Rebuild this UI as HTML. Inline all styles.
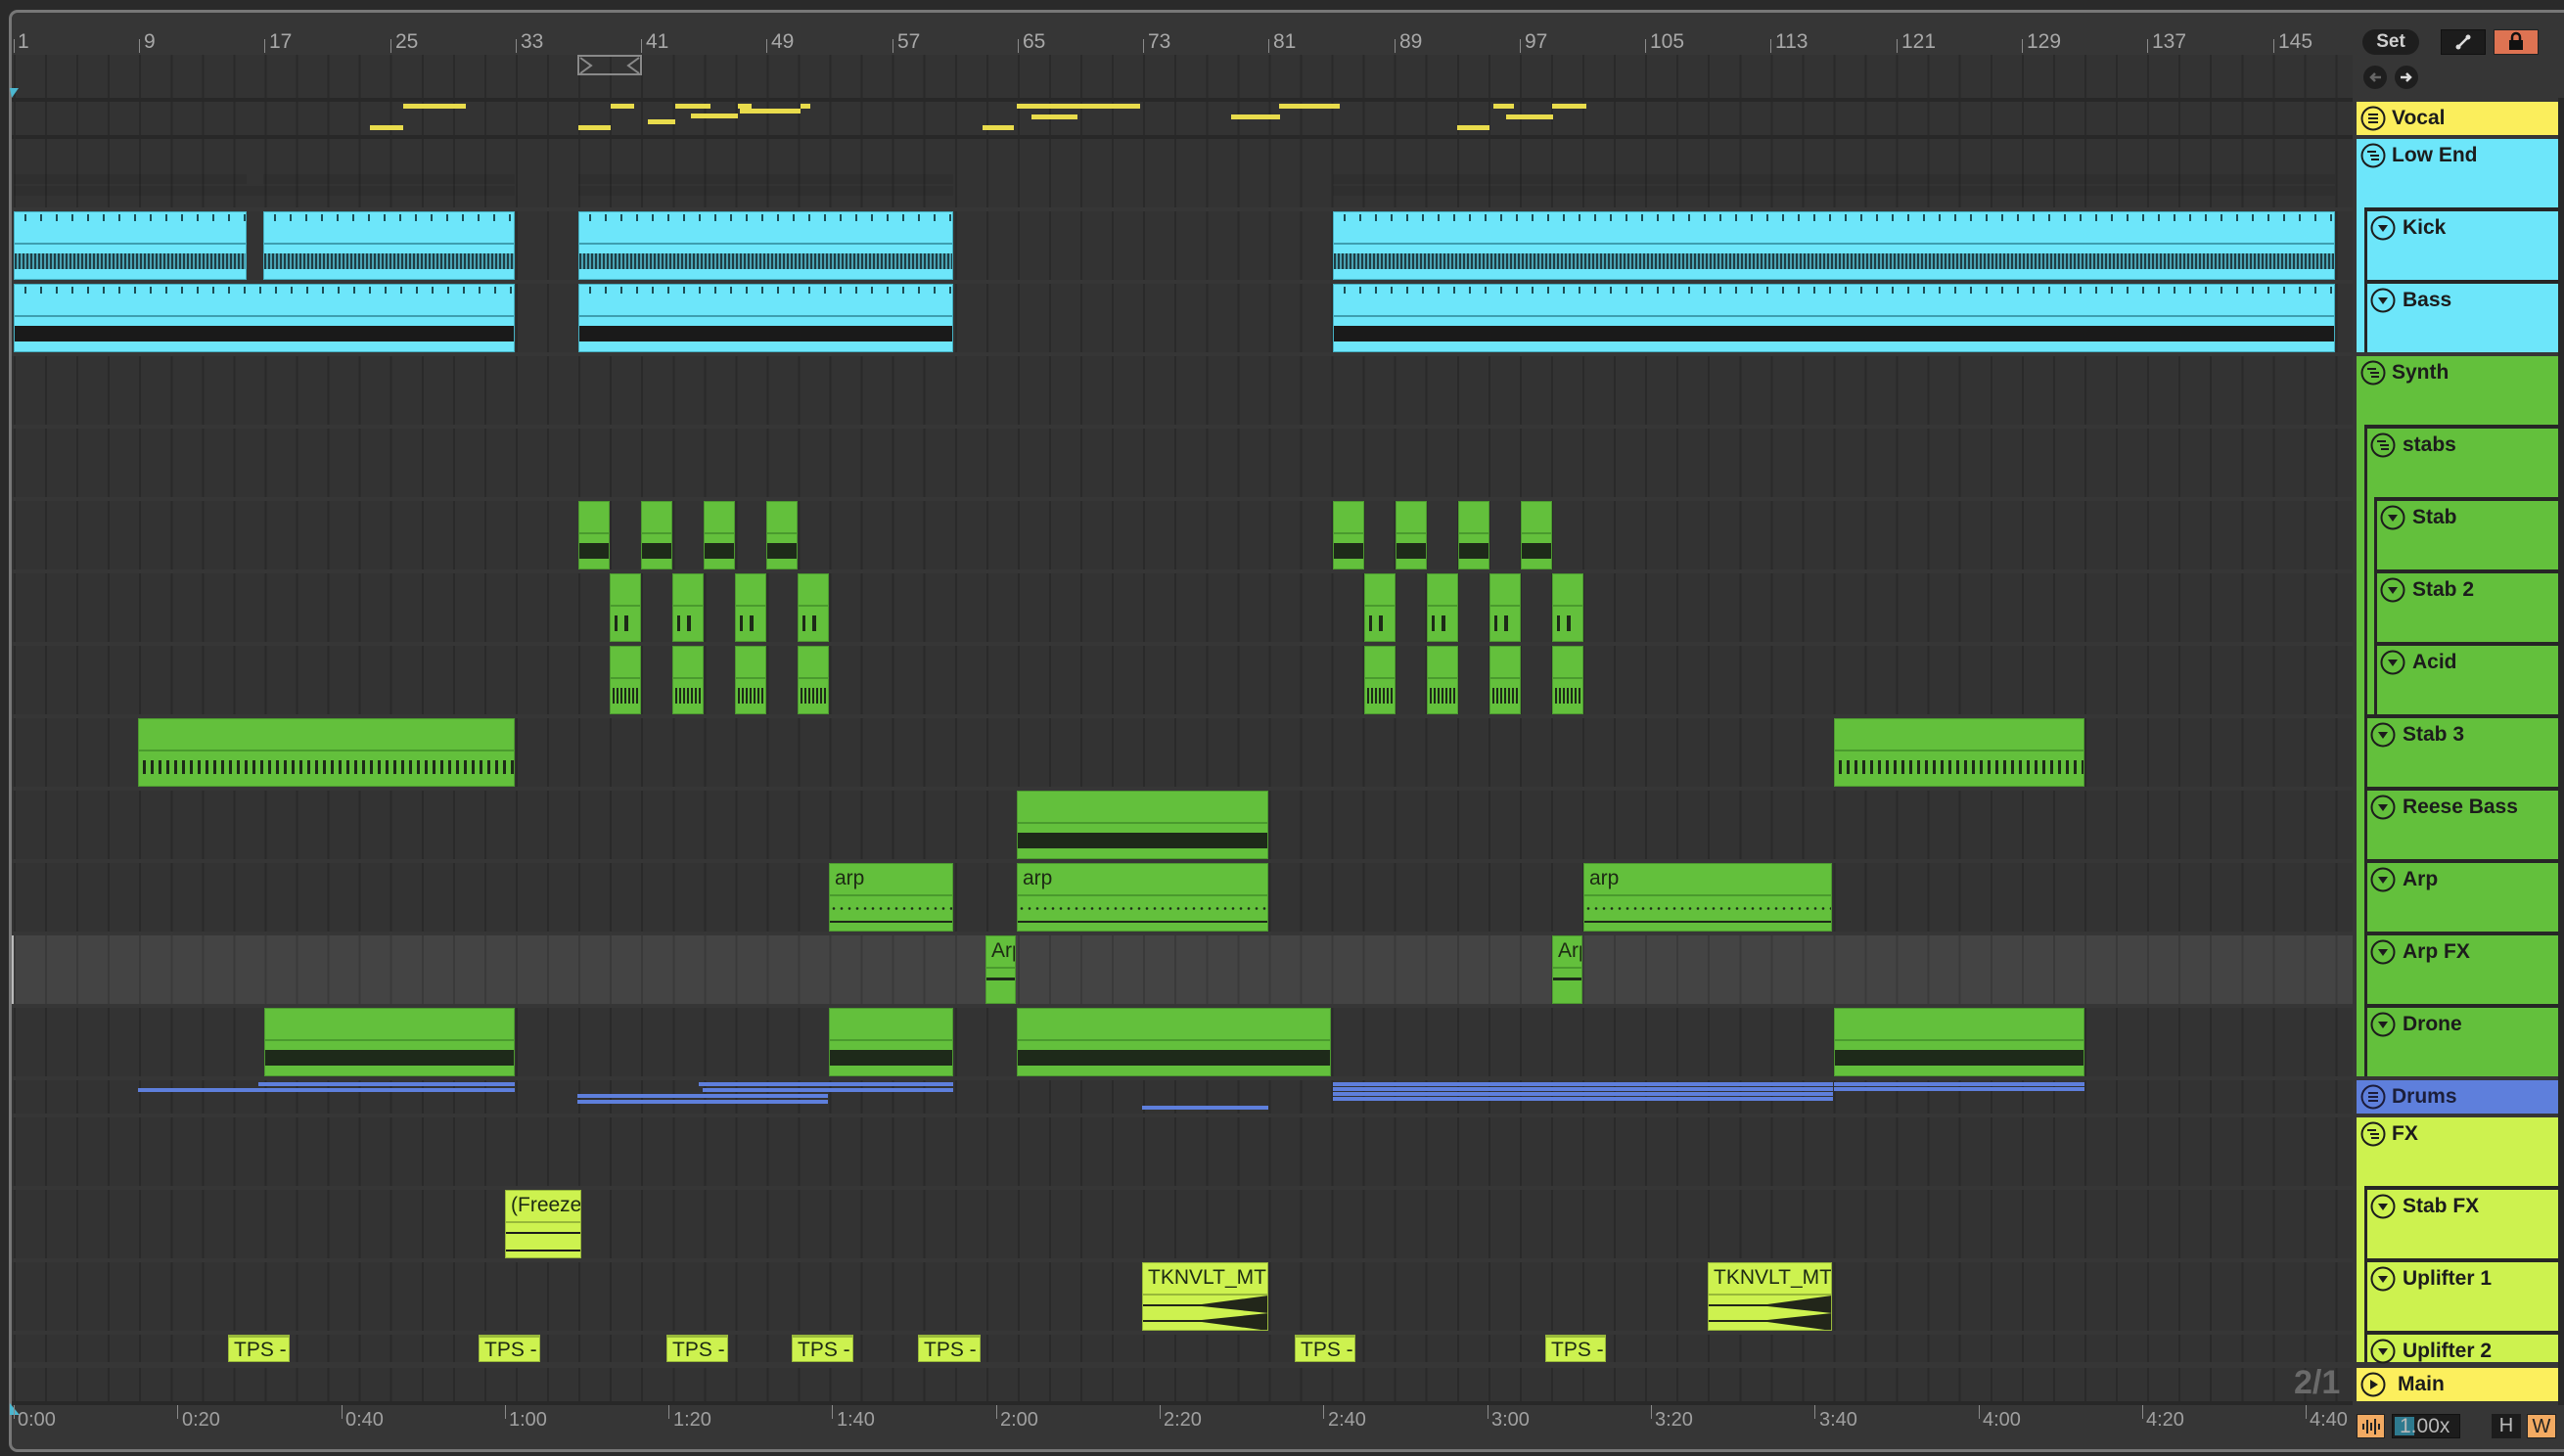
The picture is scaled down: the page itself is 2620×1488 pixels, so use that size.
<!DOCTYPE html>
<html><head><meta charset="utf-8"><style>
*{margin:0;padding:0}
body{width:2620px;height:1488px;background:#2a2a2a;position:relative;overflow:hidden;font-family:"Liberation Sans",sans-serif}
.frame{position:absolute;left:9px;top:10px;width:2640px;height:1468px;border:3px solid #777;border-right:none;border-radius:9px;background:#363636}
.a{position:absolute}
.ln{position:absolute;left:12px;width:2392px;background:repeating-linear-gradient(90deg,#2a2a2a 0 2px,transparent 2px 32.06px) 2px 0,#333}
.sel{background:repeating-linear-gradient(90deg,#3a3a3a 0 2px,transparent 2px 32.06px) 2px 0,#444}
.c{position:absolute;box-sizing:border-box;overflow:hidden;height:70px}
.cy{background:repeating-linear-gradient(90deg,#1d4c55 0 2px,transparent 2px 16px) 10px 2px/100% 7px no-repeat,linear-gradient(#6de6fa 0 31px,#3e9eb0 31px 33px,#6de6fa 33px 42px,transparent 42px 58px,#6de6fa 58px),repeating-linear-gradient(90deg,#1e3d44 0 2px,#4aa3b3 2px 4px);border:1px solid #45b0c2}
.cy.bs{background:repeating-linear-gradient(90deg,#1d4c55 0 2px,transparent 2px 16px) 10px 2px/100% 7px no-repeat,linear-gradient(#6de6fa 0 31px,#3e9eb0 31px 33px,#6de6fa 33px 42px,#1a1a1a 42px 58px,#6de6fa 58px)}
.g{background:linear-gradient(#63c03c 0 31px,#4a9a2e 31px 33px,#63c03c 33px 42px,#1e2a1a 42px 58px,#63c03c 58px);border:1px solid #4d9a30}
.g2{background:linear-gradient(90deg,transparent 4px,#1d2a18 4px 7px,transparent 7px 14px,#1d2a18 14px 18px,transparent 18px) 0 42px/100% 16px no-repeat,linear-gradient(#63c03c 0 31px,#4a9a2e 31px 33px,#63c03c 33px);border:1px solid #4d9a30}
.g3{background:repeating-linear-gradient(90deg,#1d2a18 0 2px,transparent 2px 4px) 2px 42px/100% 16px no-repeat,linear-gradient(#63c03c 0 31px,#4a9a2e 31px 33px,#63c03c 33px);border:1px solid #4d9a30}
.g4{background:repeating-linear-gradient(90deg,#1d2a18 0 3px,transparent 3px 8px) 4px 42px/100% 14px no-repeat,linear-gradient(#63c03c 0 31px,#4a9a2e 31px 33px,#63c03c 33px);border:1px solid #4d9a30}
.ga{background:radial-gradient(circle,#1d2a18 1px,transparent 1.6px) 0 42px/8px 7px repeat-x,linear-gradient(#1d2a18,#1d2a18) 0 58px/100% 2px no-repeat,linear-gradient(#63c03c 0 31px,#4a9a2e 31px 33px,#63c03c 33px);border:1px solid #4d9a30}
.lb{font-family:"Liberation Sans Narrow","Liberation Sans",sans-serif;font-size:21px;color:#1d2a14;position:absolute;left:5px;top:3px;white-space:nowrap}
.y{background:linear-gradient(#cdf24f 0 31px,#98b83a 31px 33px,#cdf24f 33px);border:1px solid #98b83a}
.n{position:absolute;height:5px;background:#e9dc4c}
.d{position:absolute;height:4px;background:#5e7fdc}
.hd{position:absolute;left:2408px;width:206px;box-sizing:border-box}
.ch{position:absolute;right:0;box-sizing:border-box;border-left:3px solid #262626;border-top:4px solid #262626;height:74px}
.t{position:absolute;font-weight:bold;font-size:21px;color:#1c1c1c;white-space:nowrap}
.ic{position:absolute;width:26px;height:26px}
.rl{position:absolute;top:31px;font-size:21px;color:#a8a8a8}
.tk{position:absolute;width:1px;background:#8a8a8a}
.tl{position:absolute;top:1440px;font-size:20px;color:#a0a0a0}
</style></head><body>
<div class="frame"></div>

<div class="tk" style="left:14px;top:40px;height:14px"></div><div class="rl" style="left:18px">1</div>
<div class="tk" style="left:142px;top:40px;height:14px"></div><div class="rl" style="left:147px">9</div>
<div class="tk" style="left:270px;top:40px;height:14px"></div><div class="rl" style="left:275px">17</div>
<div class="tk" style="left:399px;top:40px;height:14px"></div><div class="rl" style="left:404px">25</div>
<div class="tk" style="left:527px;top:40px;height:14px"></div><div class="rl" style="left:532px">33</div>
<div class="tk" style="left:655px;top:40px;height:14px"></div><div class="rl" style="left:660px">41</div>
<div class="tk" style="left:783px;top:40px;height:14px"></div><div class="rl" style="left:788px">49</div>
<div class="tk" style="left:912px;top:40px;height:14px"></div><div class="rl" style="left:917px">57</div>
<div class="tk" style="left:1040px;top:40px;height:14px"></div><div class="rl" style="left:1045px">65</div>
<div class="tk" style="left:1168px;top:40px;height:14px"></div><div class="rl" style="left:1173px">73</div>
<div class="tk" style="left:1296px;top:40px;height:14px"></div><div class="rl" style="left:1301px">81</div>
<div class="tk" style="left:1425px;top:40px;height:14px"></div><div class="rl" style="left:1430px">89</div>
<div class="tk" style="left:1553px;top:40px;height:14px"></div><div class="rl" style="left:1558px">97</div>
<div class="tk" style="left:1681px;top:40px;height:14px"></div><div class="rl" style="left:1686px">105</div>
<div class="tk" style="left:1809px;top:40px;height:14px"></div><div class="rl" style="left:1814px">113</div>
<div class="tk" style="left:1938px;top:40px;height:14px"></div><div class="rl" style="left:1943px">121</div>
<div class="tk" style="left:2066px;top:40px;height:14px"></div><div class="rl" style="left:2071px">129</div>
<div class="tk" style="left:2194px;top:40px;height:14px"></div><div class="rl" style="left:2199px">137</div>
<div class="tk" style="left:2323px;top:40px;height:14px"></div><div class="rl" style="left:2328px">145</div>

<div class="ln" style="top:56px;height:44px"></div>
<div class="ln" style="top:104px;height:34px"></div>
<div class="ln" style="top:142px;height:70px"></div>
<div class="ln" style="top:216px;height:70px"></div>
<div class="ln" style="top:290px;height:70px"></div>
<div class="ln" style="top:364px;height:70px"></div>
<div class="ln" style="top:438px;height:70px"></div>
<div class="ln" style="top:512px;height:70px"></div>
<div class="ln" style="top:586px;height:70px"></div>
<div class="ln" style="top:660px;height:70px"></div>
<div class="ln" style="top:734px;height:70px"></div>
<div class="ln" style="top:808px;height:70px"></div>
<div class="ln" style="top:882px;height:70px"></div>
<div class="ln sel" style="top:956px;height:70px"></div>
<div class="ln" style="top:1030px;height:70px"></div>
<div class="ln" style="top:1104px;height:34px"></div>
<div class="ln" style="top:1142px;height:70px"></div>
<div class="ln" style="top:1216px;height:70px"></div>
<div class="ln" style="top:1290px;height:70px"></div>
<div class="ln" style="top:1364px;height:28px"></div>
<div class="ln" style="top:1398px;height:34px"></div>
<div class="a" style="left:12px;top:100px;width:2392px;height:4px;background:#282828"></div>
<div class="a" style="left:12px;top:138px;width:2392px;height:4px;background:#282828"></div>
<div class="a" style="left:12px;top:1432px;width:2392px;height:4px;background:#282828"></div>

<div class="a" style="left:590px;top:56px;width:62px;height:17px;border:2px solid #8a8a8a"></div>
<svg class="a" style="left:590px;top:56px" width="66" height="21"><path d="M3 3 L14 11 L3 19 M63 3 L52 11 L63 19" stroke="#8a8a8a" stroke-width="2" fill="none"/></svg>
<svg class="a" style="left:10px;top:90px" width="10" height="12"><path d="M0 0 L9 0 L2 10Z" fill="#4bb7d0"/></svg>
<div class="a" style="left:12px;top:956px;width:2px;height:70px;background:#bbb"></div>

<div class="n" style="left:412px;top:106px;width:64px"></div>
<div class="n" style="left:378px;top:128px;width:34px"></div>
<div class="n" style="left:591px;top:128px;width:33px"></div>
<div class="n" style="left:624px;top:106px;width:24px"></div>
<div class="n" style="left:662px;top:122px;width:28px"></div>
<div class="n" style="left:690px;top:106px;width:36px"></div>
<div class="n" style="left:706px;top:116px;width:48px"></div>
<div class="n" style="left:754px;top:106px;width:14px"></div>
<div class="n" style="left:756px;top:111px;width:62px"></div>
<div class="n" style="left:818px;top:106px;width:10px"></div>
<div class="n" style="left:1004px;top:128px;width:32px"></div>
<div class="n" style="left:1039px;top:106px;width:126px"></div>
<div class="n" style="left:1054px;top:117px;width:47px"></div>
<div class="n" style="left:1258px;top:117px;width:50px"></div>
<div class="n" style="left:1307px;top:106px;width:62px"></div>
<div class="n" style="left:1489px;top:128px;width:33px"></div>
<div class="n" style="left:1526px;top:106px;width:21px"></div>
<div class="n" style="left:1539px;top:117px;width:48px"></div>
<div class="n" style="left:1586px;top:106px;width:35px"></div>

<div class="a" style="left:14px;top:178px;width:238px;height:10px;background:rgba(0,0,0,.07)"></div>
<div class="a" style="left:269px;top:178px;width:257px;height:10px;background:rgba(0,0,0,.07)"></div>
<div class="a" style="left:591px;top:178px;width:383px;height:10px;background:rgba(0,0,0,.07)"></div>
<div class="a" style="left:1362px;top:178px;width:1024px;height:10px;background:rgba(0,0,0,.07)"></div>
<div class="a" style="left:14px;top:190px;width:512px;height:10px;background:rgba(0,0,0,.07)"></div>
<div class="a" style="left:591px;top:190px;width:383px;height:10px;background:rgba(0,0,0,.07)"></div>
<div class="a" style="left:1362px;top:190px;width:1024px;height:10px;background:rgba(0,0,0,.07)"></div>

<div class="c cy" style="left:14px;top:216px;width:238px"></div>
<div class="c cy" style="left:269px;top:216px;width:257px"></div>
<div class="c cy" style="left:591px;top:216px;width:383px"></div>
<div class="c cy" style="left:1362px;top:216px;width:1024px"></div>
<div class="c cy bs" style="left:14px;top:290px;width:512px"></div>
<div class="c cy bs" style="left:591px;top:290px;width:383px"></div>
<div class="c cy bs" style="left:1362px;top:290px;width:1024px"></div>

<div class="c g" style="left:591px;top:512px;width:32px"></div>
<div class="c g" style="left:655px;top:512px;width:32px"></div>
<div class="c g" style="left:719px;top:512px;width:32px"></div>
<div class="c g" style="left:783px;top:512px;width:32px"></div>
<div class="c g" style="left:1362px;top:512px;width:32px"></div>
<div class="c g" style="left:1426px;top:512px;width:32px"></div>
<div class="c g" style="left:1490px;top:512px;width:32px"></div>
<div class="c g" style="left:1554px;top:512px;width:32px"></div>
<div class="c g2" style="left:623px;top:586px;width:32px"></div>
<div class="c g2" style="left:687px;top:586px;width:32px"></div>
<div class="c g2" style="left:751px;top:586px;width:32px"></div>
<div class="c g2" style="left:815px;top:586px;width:32px"></div>
<div class="c g2" style="left:1394px;top:586px;width:32px"></div>
<div class="c g2" style="left:1458px;top:586px;width:32px"></div>
<div class="c g2" style="left:1522px;top:586px;width:32px"></div>
<div class="c g2" style="left:1586px;top:586px;width:32px"></div>
<div class="c g3" style="left:623px;top:660px;width:32px"></div>
<div class="c g3" style="left:687px;top:660px;width:32px"></div>
<div class="c g3" style="left:751px;top:660px;width:32px"></div>
<div class="c g3" style="left:815px;top:660px;width:32px"></div>
<div class="c g3" style="left:1394px;top:660px;width:32px"></div>
<div class="c g3" style="left:1458px;top:660px;width:32px"></div>
<div class="c g3" style="left:1522px;top:660px;width:32px"></div>
<div class="c g3" style="left:1586px;top:660px;width:32px"></div>
<div class="c g4" style="left:141px;top:734px;width:385px"></div>
<div class="c g4" style="left:1874px;top:734px;width:256px"></div>
<div class="c g" style="left:1039px;top:808px;width:257px"></div>
<div class="c ga" style="left:847px;top:882px;width:127px"><span class="lb">arp</span></div>
<div class="c ga" style="left:1039px;top:882px;width:257px"><span class="lb">arp</span></div>
<div class="c ga" style="left:1618px;top:882px;width:254px"><span class="lb">arp</span></div>
<div class="c g" style="left:1007px;top:956px;width:31px;background:linear-gradient(#63c03c 0 31px,#4a9a2e 31px 33px,#63c03c 33px 42px,#1e2a1a 42px 45px,#63c03c 45px)"><span class="lb">Arp</span></div>
<div class="c g" style="left:1586px;top:956px;width:31px;background:linear-gradient(#63c03c 0 31px,#4a9a2e 31px 33px,#63c03c 33px 42px,#1e2a1a 42px 45px,#63c03c 45px)"><span class="lb">Arp</span></div>
<div class="c g" style="left:270px;top:1030px;width:256px"></div>
<div class="c g" style="left:847px;top:1030px;width:127px"></div>
<div class="c g" style="left:1039px;top:1030px;width:321px"></div>
<div class="c g" style="left:1874px;top:1030px;width:256px"></div>

<div class="d" style="left:264px;top:1106px;width:262px"></div>
<div class="d" style="left:141px;top:1112px;width:385px"></div>
<div class="d" style="left:590px;top:1118px;width:256px"></div>
<div class="d" style="left:590px;top:1124px;width:256px"></div>
<div class="d" style="left:714px;top:1106px;width:260px"></div>
<div class="d" style="left:718px;top:1112px;width:256px"></div>
<div class="d" style="left:1167px;top:1130px;width:129px"></div>
<div class="d" style="left:1362px;top:1106px;width:511px"></div>
<div class="d" style="left:1362px;top:1111px;width:511px"></div>
<div class="d" style="left:1362px;top:1116px;width:511px"></div>
<div class="d" style="left:1362px;top:1121px;width:511px"></div>
<div class="d" style="left:1874px;top:1106px;width:256px"></div>
<div class="d" style="left:1874px;top:1111px;width:256px"></div>

<div class="c y" style="left:516px;top:1216px;width:78px;background:linear-gradient(#cdf24f 0 31px,#98b83a 31px 33px,#cdf24f 33px 42px,#1c1c1c 42px 44px,#cdf24f 44px 60px,#1c1c1c 60px 62px,#cdf24f 62px)"><span class="lb">(Freeze</span></div>
<div class="c y" style="left:1167px;top:1290px;width:129px"><span class="lb">TKNVLT_MTE</span><svg class="a" style="left:0;top:33px" width="129" height="36"><path d="M0 9 H60 L128 0 V36 L60 27 H0 V25 H60 L128 18 L60 11 H0Z" fill="#22261a"/></svg></div>
<div class="c y" style="left:1745px;top:1290px;width:127px"><span class="lb">TKNVLT_MTE</span><svg class="a" style="left:0;top:33px" width="127" height="36"><path d="M0 9 H60 L126 0 V36 L60 27 H0 V25 H60 L126 18 L60 11 H0Z" fill="#22261a"/></svg></div>
<div class="c y" style="left:233px;top:1364px;width:63px;height:28px;border-top:3px solid #98b83a"><span class="lb" style="top:1px">TPS - I</span></div>
<div class="c y" style="left:489px;top:1364px;width:63px;height:28px;border-top:3px solid #98b83a"><span class="lb" style="top:1px">TPS - I</span></div>
<div class="c y" style="left:681px;top:1364px;width:63px;height:28px;border-top:3px solid #98b83a"><span class="lb" style="top:1px">TPS - I</span></div>
<div class="c y" style="left:809px;top:1364px;width:63px;height:28px;border-top:3px solid #98b83a"><span class="lb" style="top:1px">TPS - I</span></div>
<div class="c y" style="left:938px;top:1364px;width:64px;height:28px;border-top:3px solid #98b83a"><span class="lb" style="top:1px">TPS - I</span></div>
<div class="c y" style="left:1323px;top:1364px;width:62px;height:28px;border-top:3px solid #98b83a"><span class="lb" style="top:1px">TPS - I</span></div>
<div class="c y" style="left:1579px;top:1364px;width:62px;height:28px;border-top:3px solid #98b83a"><span class="lb" style="top:1px">TPS - I</span></div>

<svg class="a" style="left:10px;top:1434px" width="12" height="12"><path d="M0 0 L10 12 L0 12Z" fill="#4bb7d0"/></svg>
<div class="tk" style="left:14px;top:1436px;height:14px"></div><div class="tl" style="left:18px">0:00</div>
<div class="tk" style="left:181px;top:1436px;height:14px"></div><div class="tl" style="left:186px">0:20</div>
<div class="tk" style="left:349px;top:1436px;height:14px"></div><div class="tl" style="left:353px">0:40</div>
<div class="tk" style="left:516px;top:1436px;height:14px"></div><div class="tl" style="left:520px">1:00</div>
<div class="tk" style="left:683px;top:1436px;height:14px"></div><div class="tl" style="left:688px">1:20</div>
<div class="tk" style="left:850px;top:1436px;height:14px"></div><div class="tl" style="left:855px">1:40</div>
<div class="tk" style="left:1018px;top:1436px;height:14px"></div><div class="tl" style="left:1022px">2:00</div>
<div class="tk" style="left:1185px;top:1436px;height:14px"></div><div class="tl" style="left:1189px">2:20</div>
<div class="tk" style="left:1352px;top:1436px;height:14px"></div><div class="tl" style="left:1357px">2:40</div>
<div class="tk" style="left:1520px;top:1436px;height:14px"></div><div class="tl" style="left:1524px">3:00</div>
<div class="tk" style="left:1687px;top:1436px;height:14px"></div><div class="tl" style="left:1691px">3:20</div>
<div class="tk" style="left:1854px;top:1436px;height:14px"></div><div class="tl" style="left:1859px">3:40</div>
<div class="tk" style="left:2022px;top:1436px;height:14px"></div><div class="tl" style="left:2026px">4:00</div>
<div class="tk" style="left:2189px;top:1436px;height:14px"></div><div class="tl" style="left:2193px">4:20</div>
<div class="tk" style="left:2356px;top:1436px;height:14px"></div><div class="tl" style="left:2360px">4:40</div>

<div class="a" style="left:2414px;top:30px;width:58px;height:26px;border-radius:13px;background:#1e1e1e;color:#cfcfcf;font-size:19px;font-weight:bold;text-align:center;line-height:26px">Set</div>
<div class="a" style="left:2494px;top:30px;width:46px;height:26px;background:#1c1c1c;border:1px solid #111;box-sizing:border-box"><svg width="44" height="24"><path d="M17 17 L27 7" stroke="#ddd" stroke-width="2.5"/><circle cx="17" cy="17" r="2.5" fill="#ddd"/><circle cx="27" cy="7" r="2.5" fill="#ddd"/></svg></div>
<div class="a" style="left:2548px;top:30px;width:46px;height:26px;background:#de7352;border:1px solid #222;box-sizing:border-box"><svg width="44" height="24"><rect x="15" y="10" width="14" height="10" fill="#111"/><path d="M18 11 V7 a4 4 0 0 1 8 0 V11" stroke="#111" stroke-width="2.5" fill="none"/></svg></div>
<svg class="a" style="left:2414px;top:66px" width="60" height="26"><circle cx="13" cy="13" r="12" fill="#1e1e1e"/><circle cx="45" cy="13" r="12" fill="#1e1e1e"/><path d="M19 13 H9 M13 9 L9 13 L13 17" stroke="#666" stroke-width="2.5" fill="none"/><path d="M39 13 H49 M45 9 L49 13 L45 17" stroke="#ddd" stroke-width="2.5" fill="none"/></svg>

<div class="hd" style="top:104px;height:34px;background:#fbee5c"></div>
<div class="hd" style="top:142px;height:218px;background:#6de6fa">
  <div class="ch" style="left:8px;top:70px"></div><div class="ch" style="left:8px;top:144px;height:74px"></div>
</div>
<div class="hd" style="top:364px;height:736px;background:#63c03c">
  <div class="ch" style="left:8px;top:70px;height:296px"></div>
  <div class="ch" style="left:18px;top:144px"></div><div class="ch" style="left:18px;top:218px"></div><div class="ch" style="left:18px;top:292px"></div>
  <div class="ch" style="left:8px;top:366px"></div><div class="ch" style="left:8px;top:440px"></div><div class="ch" style="left:8px;top:514px"></div><div class="ch" style="left:8px;top:588px"></div><div class="ch" style="left:8px;top:662px"></div>
</div>
<div class="hd" style="top:1104px;height:34px;background:#5e7fdc"></div>
<div class="hd" style="top:1142px;height:250px;background:#cdf24f">
  <div class="ch" style="left:8px;top:70px"></div><div class="ch" style="left:8px;top:144px"></div><div class="ch" style="left:8px;top:218px;height:32px"></div>
</div>
<div class="hd" style="top:1398px;height:34px;background:#fcef5d"></div>
<div class="a" style="left:2614px;top:100px;width:6px;height:1336px;background:#282828"></div>

<svg class="ic" style="left:2412px;top:108px" viewBox="0 0 26 26"><circle cx="13" cy="13" r="11.5" fill="none" stroke="#1c1c1c" stroke-width="2"/><path d="M8 9H18M8 13H18M8 17H18" stroke="#1c1c1c" stroke-width="2"/></svg><div class="t" style="left:2444px;top:109px">Vocal</div>
<svg class="ic" style="left:2412px;top:146px" viewBox="0 0 26 26"><circle cx="13" cy="13" r="11.5" fill="none" stroke="#1c1c1c" stroke-width="2"/><path d="M7 9H16M10 13H19M11 17H19" stroke="#1c1c1c" stroke-width="2"/></svg><div class="t" style="left:2444px;top:147px">Low End</div>
<svg class="ic" style="left:2422px;top:220px" viewBox="0 0 26 26"><circle cx="13" cy="13" r="11.5" fill="none" stroke="#1c1c1c" stroke-width="2"/><path d="M8 10H18L13 17Z" fill="#1c1c1c"/></svg><div class="t" style="left:2455px;top:221px">Kick</div>
<svg class="ic" style="left:2422px;top:294px" viewBox="0 0 26 26"><circle cx="13" cy="13" r="11.5" fill="none" stroke="#1c1c1c" stroke-width="2"/><path d="M8 10H18L13 17Z" fill="#1c1c1c"/></svg><div class="t" style="left:2455px;top:295px">Bass</div>
<svg class="ic" style="left:2412px;top:368px" viewBox="0 0 26 26"><circle cx="13" cy="13" r="11.5" fill="none" stroke="#1c1c1c" stroke-width="2"/><path d="M7 9H16M10 13H19M11 17H19" stroke="#1c1c1c" stroke-width="2"/></svg><div class="t" style="left:2444px;top:369px">Synth</div>
<svg class="ic" style="left:2422px;top:442px" viewBox="0 0 26 26"><circle cx="13" cy="13" r="11.5" fill="none" stroke="#1c1c1c" stroke-width="2"/><path d="M7 9H16M10 13H19M11 17H19" stroke="#1c1c1c" stroke-width="2"/></svg><div class="t" style="left:2455px;top:443px">stabs</div>
<svg class="ic" style="left:2432px;top:516px" viewBox="0 0 26 26"><circle cx="13" cy="13" r="11.5" fill="none" stroke="#1c1c1c" stroke-width="2"/><path d="M8 10H18L13 17Z" fill="#1c1c1c"/></svg><div class="t" style="left:2465px;top:517px">Stab</div>
<svg class="ic" style="left:2432px;top:590px" viewBox="0 0 26 26"><circle cx="13" cy="13" r="11.5" fill="none" stroke="#1c1c1c" stroke-width="2"/><path d="M8 10H18L13 17Z" fill="#1c1c1c"/></svg><div class="t" style="left:2465px;top:591px">Stab 2</div>
<svg class="ic" style="left:2432px;top:664px" viewBox="0 0 26 26"><circle cx="13" cy="13" r="11.5" fill="none" stroke="#1c1c1c" stroke-width="2"/><path d="M8 10H18L13 17Z" fill="#1c1c1c"/></svg><div class="t" style="left:2465px;top:665px">Acid</div>
<svg class="ic" style="left:2422px;top:738px" viewBox="0 0 26 26"><circle cx="13" cy="13" r="11.5" fill="none" stroke="#1c1c1c" stroke-width="2"/><path d="M8 10H18L13 17Z" fill="#1c1c1c"/></svg><div class="t" style="left:2455px;top:739px">Stab 3</div>
<svg class="ic" style="left:2422px;top:812px" viewBox="0 0 26 26"><circle cx="13" cy="13" r="11.5" fill="none" stroke="#1c1c1c" stroke-width="2"/><path d="M8 10H18L13 17Z" fill="#1c1c1c"/></svg><div class="t" style="left:2455px;top:813px">Reese Bass</div>
<svg class="ic" style="left:2422px;top:886px" viewBox="0 0 26 26"><circle cx="13" cy="13" r="11.5" fill="none" stroke="#1c1c1c" stroke-width="2"/><path d="M8 10H18L13 17Z" fill="#1c1c1c"/></svg><div class="t" style="left:2455px;top:887px">Arp</div>
<svg class="ic" style="left:2422px;top:960px" viewBox="0 0 26 26"><circle cx="13" cy="13" r="11.5" fill="none" stroke="#1c1c1c" stroke-width="2"/><path d="M8 10H18L13 17Z" fill="#1c1c1c"/></svg><div class="t" style="left:2455px;top:961px">Arp FX</div>
<svg class="ic" style="left:2422px;top:1034px" viewBox="0 0 26 26"><circle cx="13" cy="13" r="11.5" fill="none" stroke="#1c1c1c" stroke-width="2"/><path d="M8 10H18L13 17Z" fill="#1c1c1c"/></svg><div class="t" style="left:2455px;top:1035px">Drone</div>
<svg class="ic" style="left:2412px;top:1108px" viewBox="0 0 26 26"><circle cx="13" cy="13" r="11.5" fill="none" stroke="#1c1c3a" stroke-width="2"/><path d="M8 9H18M8 13H18M8 17H18" stroke="#1c1c3a" stroke-width="2"/></svg><div class="t" style="left:2444px;top:1109px;color:#1c1f3a">Drums</div>
<svg class="ic" style="left:2412px;top:1146px" viewBox="0 0 26 26"><circle cx="13" cy="13" r="11.5" fill="none" stroke="#1c1c1c" stroke-width="2"/><path d="M7 9H16M10 13H19M11 17H19" stroke="#1c1c1c" stroke-width="2"/></svg><div class="t" style="left:2444px;top:1147px">FX</div>
<svg class="ic" style="left:2422px;top:1220px" viewBox="0 0 26 26"><circle cx="13" cy="13" r="11.5" fill="none" stroke="#1c1c1c" stroke-width="2"/><path d="M8 10H18L13 17Z" fill="#1c1c1c"/></svg><div class="t" style="left:2455px;top:1221px">Stab FX</div>
<svg class="ic" style="left:2422px;top:1294px" viewBox="0 0 26 26"><circle cx="13" cy="13" r="11.5" fill="none" stroke="#1c1c1c" stroke-width="2"/><path d="M8 10H18L13 17Z" fill="#1c1c1c"/></svg><div class="t" style="left:2455px;top:1295px">Uplifter 1</div>
<svg class="ic" style="left:2422px;top:1368px" viewBox="0 0 26 26"><circle cx="13" cy="13" r="11.5" fill="none" stroke="#1c1c1c" stroke-width="2"/><path d="M8 10H18L13 17Z" fill="#1c1c1c"/></svg><div class="t" style="left:2455px;top:1369px;height:23px;overflow:hidden">Uplifter 2</div>
<svg class="ic" style="left:2412px;top:1402px" viewBox="0 0 26 26"><circle cx="13" cy="13" r="11.5" fill="none" stroke="#1c1c1c" stroke-width="2"/><path d="M10 8L18 13L10 18Z" fill="#1c1c1c"/></svg><div class="t" style="left:2450px;top:1403px">Main</div>

<div class="a" style="left:2344px;top:1394px;font-size:34px;font-weight:bold;color:#6a6a6a">2/1</div>

<div class="a" style="left:2408px;top:1445px;width:29px;height:25px;background:#f2aa62;border:1px solid #222;box-sizing:border-box"><svg width="27" height="23"><path d="M6 9V15M10 5V19M14 8V16M18 4V20M22 9V15" stroke="#222" stroke-width="2"/></svg></div>
<div class="a" style="left:2444px;top:1445px;width:70px;height:25px;background:#1c1c1c;border:1px solid #111;box-sizing:border-box"><div class="a" style="left:2px;top:2px;width:20px;height:19px;background:#2e7a8f"></div><div class="a" style="left:7px;top:0;font-size:21px;color:#b9b9b9;line-height:23px">1.00x</div></div>
<div class="a" style="left:2546px;top:1445px;width:30px;height:25px;background:#1c1c1c;color:#bbb;font-size:20px;text-align:center;line-height:25px">H</div>
<div class="a" style="left:2582px;top:1445px;width:30px;height:25px;background:#f2aa62;color:#222;font-size:20px;text-align:center;line-height:25px;border:1px solid #222;box-sizing:border-box">W</div>
</body></html>
